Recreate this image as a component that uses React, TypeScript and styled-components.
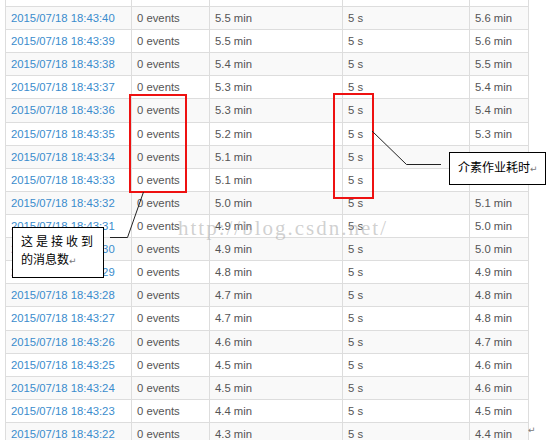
import React from "react";
import styled, { createGlobalStyle } from "styled-components";

const GlobalStyle = createGlobalStyle`
  html, body { margin: 0; padding: 0; background: #ffffff; }
  body { font-family: "Liberation Sans", Arial, sans-serif; }
`;

const Page = styled.div`
  position: relative;
  width: 549px;
  height: 440px;
  overflow: hidden;
  background: #fff;
`;

const Table = styled.div`
  margin-left: 5px;
  width: 524px;
  display: flex;
  flex-direction: column;
`;

const COLS = "126px 78px 133px 127px 60px";

const Row = styled.div<{ $striped?: boolean; $spacer?: boolean }>`
  display: grid;
  grid-template-columns: ${COLS};
  height: ${(p) => (p.$spacer ? "6px" : "23.11px")};
  box-sizing: border-box;
  border-top: ${(p) => (p.$spacer ? "none" : "1px solid #dddddd")};
  background: ${(p) => (p.$striped ? "#f9f9f9" : "#ffffff")};
  flex-shrink: 0;
`;

const Cell = styled.div<{ $last?: boolean }>`
  box-sizing: border-box;
  border-left: 1px solid #dddddd;
  border-right: ${(p) => (p.$last ? "1px solid #dddddd" : "none")};
  padding-left: 5px;
  display: flex;
  align-items: center;
  font-size: 11.3px;
  color: #555555;
  white-space: nowrap;
  overflow: hidden;
`;

const DateLink = styled.a`
  color: #3a8ccd;
  text-decoration: none;
`;

const Watermark = styled.div`
  position: absolute;
  left: 178px;
  top: 216px;
  font-family: "Liberation Serif", "Times New Roman", serif;
  font-size: 21px;
  letter-spacing: 2px;
  color: rgba(170, 170, 170, 0.55);
  pointer-events: none;
  white-space: nowrap;
`;

const Highlight = styled.div<{ $x: number; $y: number; $w: number; $h: number }>`
  position: absolute;
  left: ${(p) => p.$x}px;
  top: ${(p) => p.$y}px;
  width: ${(p) => p.$w}px;
  height: ${(p) => p.$h}px;
  box-sizing: border-box;
  border: 2px solid #ee1111;
`;

const Callout = styled.div<{ $x: number; $y: number; $w: number; $h: number }>`
  position: absolute;
  left: ${(p) => p.$x}px;
  top: ${(p) => p.$y}px;
  width: ${(p) => p.$w}px;
  height: ${(p) => p.$h}px;
  box-sizing: border-box;
  border: 1px solid #000000;
  background: #ffffff;
  padding-left: 8px;
  font-family: "Liberation Sans", "Noto Sans CJK SC", sans-serif;
  font-size: 12px;
  color: #000000;
`;

const CalloutLine = styled.div<{ $spacing?: number; $lh: number }>`
  line-height: ${(p) => p.$lh}px;
  letter-spacing: ${(p) => p.$spacing ?? 0}px;
  white-space: nowrap;
`;

const ReturnMark = styled.span`
  font-family: "DejaVu Sans", sans-serif;
  font-size: 9px;
  color: #777777;
  letter-spacing: 0;
`;

const PageReturn = styled(ReturnMark)`
  position: absolute;
  left: 528px;
  top: 425px;
`;

const Connectors = styled.svg`
  position: absolute;
  left: 0;
  top: 0;
  pointer-events: none;
`;

type Entry = { sec: string; min: string; last: string };

const rows: Entry[] = [
  { sec: "40", min: "5.5", last: "5.6" },
  { sec: "39", min: "5.5", last: "5.6" },
  { sec: "38", min: "5.4", last: "5.5" },
  { sec: "37", min: "5.3", last: "5.4" },
  { sec: "36", min: "5.3", last: "5.4" },
  { sec: "35", min: "5.2", last: "5.3" },
  { sec: "34", min: "5.1", last: "5.2" },
  { sec: "33", min: "5.1", last: "5.1" },
  { sec: "32", min: "5.0", last: "5.1" },
  { sec: "31", min: "4.9", last: "5.0" },
  { sec: "30", min: "4.9", last: "5.0" },
  { sec: "29", min: "4.8", last: "4.9" },
  { sec: "28", min: "4.7", last: "4.8" },
  { sec: "27", min: "4.7", last: "4.8" },
  { sec: "26", min: "4.6", last: "4.7" },
  { sec: "25", min: "4.5", last: "4.6" },
  { sec: "24", min: "4.5", last: "4.6" },
  { sec: "23", min: "4.4", last: "4.5" },
  { sec: "22", min: "4.3", last: "4.4" },
];

export default function App() {
  return (
    <>
      <GlobalStyle />
      <Page>
        <Table>
          <Row $spacer>
            <Cell />
            <Cell />
            <Cell />
            <Cell />
            <Cell $last />
          </Row>
          {rows.map((r, i) => (
            <Row key={r.sec} $striped={i % 2 === 0}>
              <Cell>
                <DateLink href="#">2015/07/18 18:43:{r.sec}</DateLink>
              </Cell>
              <Cell>0 events</Cell>
              <Cell>{r.min} min</Cell>
              <Cell>5 s</Cell>
              <Cell $last>{r.last} min</Cell>
            </Row>
          ))}
        </Table>

        <Watermark>http://blog.csdn.net/</Watermark>

        <Highlight $x={129} $y={94} $w={58} $h={99} />
        <Highlight $x={333} $y={93} $w={41} $h={106} />

        <Connectors width="549" height="440" viewBox="0 0 549 440">
          <polyline
            points="143.5,192 127.5,237.5 110,237.5"
            fill="none"
            stroke="#222"
            strokeWidth="1"
          />
          <polyline
            points="372,131 406.5,164.5 441,164.5"
            fill="none"
            stroke="#222"
            strokeWidth="1"
          />
        </Connectors>

        <Callout $x={12} $y={227} $w={92} $h={51} style={{ paddingTop: 5 }}>
          <CalloutLine $lh={18} $spacing={3}>这是接收到</CalloutLine>
          <CalloutLine $lh={18}>
            的消息数<ReturnMark>↵</ReturnMark>
          </CalloutLine>
        </Callout>

        <Callout $x={449} $y={152} $w={97} $h={33}>
          <CalloutLine $lh={31}>
            介素作业耗时<ReturnMark>↵</ReturnMark>
          </CalloutLine>
        </Callout>

        <PageReturn>↵</PageReturn>
      </Page>
    </>
  );
}
